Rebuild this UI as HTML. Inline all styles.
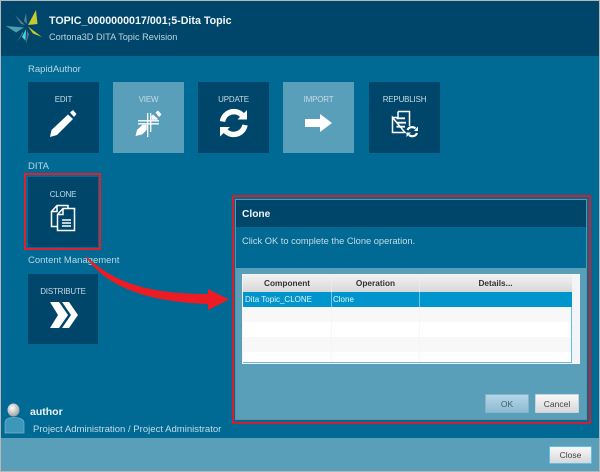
<!DOCTYPE html>
<html><head><meta charset="utf-8"><style>
html,body{margin:0;padding:0;background:#b8b8b8}
body{width:600px;height:472px;overflow:hidden;position:relative;font-family:"Liberation Sans",sans-serif}
#r{position:absolute;left:0;top:0;width:600px;height:472px;filter:blur(.35px)}
#w{position:absolute;left:1px;top:1px;width:598px;height:470px;background:#006a94;overflow:hidden}
.a{position:absolute}
.t{position:absolute;white-space:nowrap;line-height:12px}
.tile{position:absolute;width:71px;height:71px;background:#00466b}
.tile.l{background:#5a9fba}
.tile span{position:absolute;left:0;right:0;top:13px;text-align:center;font-size:8px;letter-spacing:-.2px;line-height:10px;color:#c4dce6}
.tile svg{position:absolute;left:0;top:0}
.btn{position:absolute;box-sizing:border-box;text-align:center;font-size:8.5px;color:#444;background:linear-gradient(#f8f8f8,#d8d8d8);border-radius:1px}
.cell{position:absolute;font-size:8px;line-height:15px;white-space:nowrap}
.h{top:277px;text-align:center;font-weight:bold;color:#333;font-size:8.300px;line-height:13px}
</style></head><body><div id="r">
<div id="w"></div>
<div class="a" style="left:1px;top:1px;width:598px;height:55px;background:#00466b"></div>
<div class="a" style="left:1px;top:438px;width:598px;height:33px;background:#5a9fba"></div>

<svg class="a" style="left:0;top:0" width="50" height="50">
<path d="M15 15L25 25 21 24Z" fill="#5a7f92"/>
<path d="M26 13L27 24 24 21Z" fill="#5a7f92"/>
<path d="M26 44L27 31 29 34Z" fill="#6d7078"/>
<path d="M17 42L23 31 23 34Z" fill="#59707e"/>
<path d="M36 10L37.500 24 28 25Z" fill="#c7c92c"/>
<path d="M28 26.500L42 37 33 33.500Z" fill="#c7c92c"/>
<path d="M6 26L24 27.500 16 32.500Z" fill="#4aa0ac"/>
<path d="M26 29L25.500 40.500 22 37Z" fill="#38dcec"/>
</svg>
<div class="t" style="left:49px;top:15px;font-size:10.700px;font-weight:bold;color:#f2f6f8">TOPIC_0000000017/001;5-Dita Topic</div>
<div class="t" style="left:49px;top:31px;font-size:9.200px;color:#b9d3df">Cortona3D DITA Topic Revision</div>

<div class="t" style="left:28px;top:64px;font-size:9.500px;color:#b9d6e2">RapidAuthor</div>
<div class="tile" style="left:28px;top:82px"><span>EDIT</span>
<svg width="71" height="71"><path d="M22 55L23.500 48 40 32.500 45 37 29 53Z M42 30.500L45 28 48.500 32 46 35Z" fill="#fff"/></svg></div>
<div class="tile l" style="left:113px;top:82px"><span>VIEW</span>
<svg width="71" height="71"><path d="M22.500 54L24 48 40 32.500 45 37 29 52.500Z M42.500 30.500L45 28.500 48.500 32.500 46 35Z" fill="#fff"/><path d="M36.200 30V56M24 40.300H47" stroke="#5a9fba" stroke-width="5" fill="none"/><path d="M34.700 31V55M37.700 31V50M25 38.800H46M25 41.800H46" stroke="#fff" stroke-width="1.300" fill="none"/></svg></div>
<div class="tile" style="left:198px;top:82px"><span>UPDATE</span>
<svg width="71" height="71"><path d="M24.500 39.500A11.500 11.500 0 0 1 44 33" fill="none" stroke="#fff" stroke-width="5.500"/><path d="M39.500 37.500H49V28Z" fill="#fff"/><path d="M47 43A11.500 11.500 0 0 1 27.500 49" fill="none" stroke="#fff" stroke-width="5.500"/><path d="M32 45H22V54.500Z" fill="#fff"/></svg></div>
<div class="tile l" style="left:283px;top:82px"><span>IMPORT</span>
<svg width="71" height="71"><path d="M22 37H37V32L49 41 37 50V45H22Z" fill="#fff"/></svg></div>
<div class="tile" style="left:369px;top:82px"><span>REPUBLISH</span>
<svg width="71" height="71"><path d="M29 29.500H40.500V44M36 50.500H23.500V35.500Z M29 29.500V35.500H23.500" fill="none" stroke="#fff" stroke-width="1.500"/><path d="M27.500 36.300H36M27.500 40.700H37M27.500 44.700H36" stroke="#fff" stroke-width="1.800"/><path d="M38.500 48A5 5 0 0 1 46.500 46.500M48 51A5 5 0 0 1 40 53" fill="none" stroke="#fff" stroke-width="2.200"/><path d="M45 49H49V44.500ZM42 50.500H37.500V55Z" fill="#fff"/></svg></div>

<div class="t" style="left:28px;top:161px;font-size:9.500px;color:#b9d6e2">DITA</div>
<div class="tile" style="left:28px;top:177px;width:70px;height:70px"><span>CLONE</span>
<svg width="71" height="71"><path d="M29 28.500H40V49.500H23.500V34.500Z M29 28.500V34.500H23.500" fill="#00466b" stroke="#fff" stroke-width="1.500"/><path d="M35 31.500H46.500V53.500H29.500V37.500Z M35 31.500V37.500H29.500" fill="#00466b" stroke="#fff" stroke-width="1.500"/><path d="M34 43H43M34 46H43M34 49H43" stroke="#fff" stroke-width="1.500"/></svg></div>
<div class="a" style="left:24px;top:173px;width:73px;height:73px;border:2px solid #e0202c"></div>
<div class="t" style="left:28px;top:255px;font-size:9.500px;color:#b9d6e2">Content Management</div>
<div class="tile" style="left:28px;top:274px;width:70px;height:70px"><span>DISTRIBUTE</span>
<svg width="71" height="71"><path d="M22 28H31L40 41 31 54H22L30 41Z M34 28H41L50 41 41 54H34L43 41Z" fill="#fff"/></svg></div>

<svg class="a" style="left:0;top:0" width="600" height="472"><path d="M84 254C112 283 150 294 208 294V289L229 299.500 208 310V304C150 302 105 288 84 254Z" fill="#ed1c24"/></svg>

<!-- dialog -->
<div class="a" style="left:232px;top:195px;width:355px;height:225px;border:2px solid #cf2030"></div>
<div class="a" style="left:235px;top:199px;width:350px;height:219px;background:#5a9fba;border:1px solid #6f8c98"></div>
<div class="a" style="left:236px;top:200px;width:350px;height:27px;background:#00466b"></div>
<div class="a" style="left:236px;top:227px;width:350px;height:41px;background:#006a94"></div>
<div class="t" style="left:242px;top:209px;font-size:10.200px;font-weight:bold;color:#eef4f7">Clone</div>
<div class="t" style="left:242px;top:235px;font-size:9.300px;color:#c3dce6">Click OK to complete the Clone operation.</div>

<div class="a" style="left:242px;top:274px;width:338px;height:90px;background:#f2f4f5"></div>
<div class="a" style="left:243px;top:275px;width:329px;height:88px;background:#fff;border-right:1px solid #66bde0;border-bottom:1px solid #66bde0;box-sizing:border-box"></div>
<div class="a" style="left:243px;top:275px;width:329px;height:17px;background:linear-gradient(#f2f2f2,#d8d8d8)"></div>
<div class="a" style="left:243px;top:292px;width:329px;height:15px;background:#0095cc"></div>
<div class="a" style="left:243px;top:307px;width:328px;height:15px;background:#f8f8f8"></div>
<div class="a" style="left:243px;top:337px;width:328px;height:15px;background:#f8f8f8"></div>
<div class="a" style="left:331px;top:275px;width:1px;height:87px;background:#f0f0f0;opacity:.5"></div>
<div class="a" style="left:419px;top:275px;width:1px;height:87px;background:#f0f0f0;opacity:.5"></div>
<div class="cell h" style="left:243px;width:88px">Component</div>
<div class="cell h" style="left:332px;width:87px">Operation</div>
<div class="cell h" style="left:420px;width:151px">Details...</div>
<div class="cell" style="left:245px;top:292px;color:#e4f3f9">Dita Topic_CLONE</div>
<div class="cell" style="left:333px;top:292px;color:#e4f3f9">Clone</div>

<div class="btn" style="left:485px;top:394px;width:44px;height:19px;line-height:18px;background:linear-gradient(#b4d6e8,#8dbbd2);color:#46606c;border:1px solid #86b3c9">OK</div>
<div class="btn" style="left:535px;top:394px;width:44px;height:19px;line-height:18px;border:1px solid #c8d4da">Cancel</div>

<!-- user -->
<svg class="a" style="left:0;top:400px" width="30" height="40"><defs><radialGradient id="h" cx=".4" cy=".35" r=".7"><stop offset="0" stop-color="#fff"/><stop offset="1" stop-color="#9a9a9a"/></radialGradient></defs><ellipse cx="13.500" cy="10" rx="6" ry="6.500" fill="url(#h)"/><path d="M5 33V23C5 19 9 17.500 14 17.500S24 19 24 23V33Z" fill="#3d97b8" stroke="#74b4cc" stroke-width=".7"/></svg>
<div class="t" style="left:30px;top:406px;font-size:10.500px;font-weight:bold;color:#eef4f7">author</div>
<div class="t" style="left:33px;top:424px;font-size:9.550px;color:#c3dce6">Project Administration / Project Administrator</div>

<div class="btn" style="left:549px;top:446px;width:43px;height:18px;line-height:17px;border:1px solid #66bde0">Close</div>
</div></body></html>
